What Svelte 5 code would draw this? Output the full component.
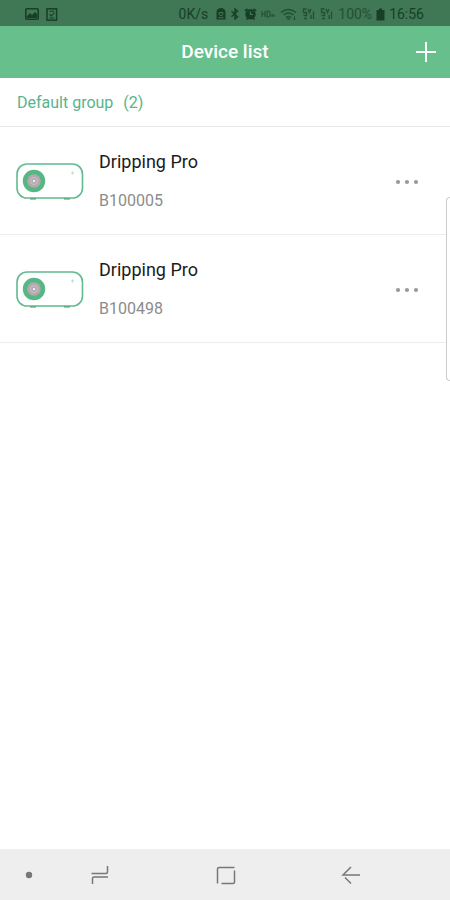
<script>
  let groupName = 'Default group';
  let devices = [
    { name: 'Dripping Pro', serial: 'B100005' },
    { name: 'Dripping Pro', serial: 'B100498' }
  ];
</script>

<div class="screen">
  <div class="status">
    <div class="notices">
      <svg width="14" height="12" viewBox="0 0 14 12">
        <rect x="0.8" y="0.8" width="12.4" height="10.4" rx="1" fill="none" stroke="currentColor" stroke-width="1.6" />
        <path d="M2 10V8l3-3 2 2 3-3 2 2v4z" fill="currentColor" />
      </svg>
      <svg width="12" height="13" viewBox="0 0 12 13">
        <rect x="1" y="0.8" width="9.6" height="11.4" fill="none" stroke="currentColor" stroke-width="1.5" />
        <path d="M3.5 3.2h4.6M3.5 6.2l1.8 1.8 3-3.2M3.5 10h4.6" fill="none" stroke="currentColor" stroke-width="1.1" />
      </svg>
    </div>
    <span class="speed">0K/s</span>
    <svg width="10" height="12" viewBox="0 0 10 12">
      <path d="M0.5 11.5V4a4.5 4 0 0 1 9 0v7.5z" fill="currentColor" />
      <path d="M3.2 4.5h3.6v2L5 8 3.2 6.5zM2.5 9.7h5" fill="none" stroke="#407755" stroke-width="1" />
    </svg>
    <svg width="10" height="12" viewBox="0 0 10 12">
      <path d="M1.5 3.3l6 5.4L5 11V1l2.5 2.3-6 5.4" fill="none" stroke="currentColor" stroke-width="1.4" />
    </svg>
    <svg width="13" height="12" viewBox="0 0 13 12">
      <circle cx="6.5" cy="6.3" r="5.2" fill="currentColor" />
      <path d="M0.8 2.8L3.5 0.8M12.2 2.8L9.5 0.8M2.5 11.5L4 10M10.5 11.500L9 10" stroke="currentColor" stroke-width="1.6" />
      <path d="M6.5 3.5v3H9" fill="none" stroke="#407755" stroke-width="1.2" />
    </svg>
    <svg class="dim" width="15" height="8" viewBox="0 0 15 8">
      <path d="M1 1v6M4 1v6M1 4h3M6 1v6h1l2-1V2L7 1zM11 4v3M11 5h2v2" fill="none" stroke="currentColor" stroke-width="1.1" />
    </svg>
    <svg class="dim" width="18" height="13" viewBox="0 0 18 13">
      <path d="M1 4.5q7.500-6 15 0M3.500 7q5-4 10 0M6 9.500q2.500-2 5 0" fill="none" stroke="currentColor" stroke-width="1.3" />
      <path d="M7 10.5h3L8.5 12zM14.5 8v4M13.3 10.8l1.2 1.2 1.2-1.2" fill="none" stroke="currentColor" stroke-width="0.9" />
    </svg>
    {#each [1, 2] as sim (sim)}
      <svg class="dim" width="14" height="12" viewBox="0 0 14 12">
        <path d="M4.5 1h-3v3.5h3v3h-3M6 1l1.500 3.500L9 1M2 10.500h3M9 11V7M11.500 11V3.500" fill="none" stroke="currentColor" stroke-width="1.3" />
      </svg>
    {/each}
    <span class="dim">100%</span>
    <svg width="9" height="13" viewBox="0 0 9 13">
      <path d="M0.5 2H3V0.500h3V2h2.500v10.500h-8z" fill="currentColor" />
    </svg>
    <span>16:56</span>
  </div>

  <header>
    <h1>Device list</h1>
    <button class="add" aria-label="Add device">
      <svg width="22" height="22" viewBox="0 0 22 22">
        <path d="M11 1v20M1 11h20" stroke="currentColor" stroke-width="2" />
      </svg>
    </button>
  </header>

  <main>
    <h2>{groupName}<span>({devices.length})</span></h2>
    <ul>
      {#each devices as device (device.serial)}
        <li>
          <svg width="68" height="38" viewBox="0 0 68 38">
            <path d="M14 35.5h6M48 35.5h6" stroke="#61866f" stroke-width="2" />
            <rect x="1" y="1" width="65.5" height="34" rx="10" fill="#fff" stroke="#62bb90" stroke-width="1.6" />
            <circle cx="18" cy="18" r="11.2" fill="#55b884" />
            <circle cx="18" cy="18" r="6.8" fill="#b3a9af" />
            <circle cx="18" cy="18" r="3.5" fill="none" stroke="#cbc5c8" stroke-width="1" />
            <circle cx="18" cy="18" r="1.2" fill="#eee" />
            <path d="M56.5 8.5v3M55 10h3" stroke="#b4dfc8" stroke-width="1" />
          </svg>
          <div class="info">
            <p class="name">{device.name}</p>
            <p class="serial">{device.serial}</p>
          </div>
          <button class="more" aria-label="Options for {device.serial}">
            <svg width="24" height="6" viewBox="0 0 24 6">
              <g fill="currentColor">
                <circle cx="3" cy="3" r="2.1" />
                <circle cx="12" cy="3" r="2.1" />
                <circle cx="21" cy="3" r="2.1" />
              </g>
            </svg>
          </button>
        </li>
      {/each}
    </ul>
  </main>

  <nav>
    <button aria-label="Toggle navigation bar">
      <svg width="20" height="20" viewBox="0 0 20 20"><circle cx="10" cy="10" r="3.2" fill="currentColor" /></svg>
    </button>
    <div class="keys">
      <button aria-label="Recent apps">
        <svg width="20" height="20" viewBox="0 0 20 20">
          <path d="M1.500 8.500H16q1.500 0 1.500-1.500V1M18 12H4q-1.500 0-1.500 1.500V19" fill="none" stroke="currentColor" stroke-width="1.5" />
        </svg>
      </button>
      <button aria-label="Home">
        <svg width="20" height="20" viewBox="0 0 20 20">
          <path d="M18.500 2.500H3q-1.500 0-1.500 1.500V18.500M5.500 18.500H17q1.500 0 1.500-1.500V5.500" fill="none" stroke="currentColor" stroke-width="1.5" />
        </svg>
      </button>
      <button aria-label="Back">
        <svg width="20" height="20" viewBox="0 0 20 20">
          <path d="M19 10H2l8-8M4 12.5l6 6" fill="none" stroke="currentColor" stroke-width="1.5" />
        </svg>
      </button>
    </div>
  </nav>

  <div class="edge-handle"></div>
</div>

<style>
  :global(body) {
    margin: 0;
    font-family: Roboto, "Liberation Sans", sans-serif;
  }

  .screen {
    display: flex;
    flex-direction: column;
    min-height: 100vh;
    background: #fff;
    overflow: hidden;
  }

  svg {
    display: block;
    flex: none;
  }

  button {
    padding: 0;
    border: 0;
    background: none;
    color: inherit;
    cursor: pointer;
  }

  .status {
    display: flex;
    align-items: center;
    gap: 4px;
    height: 26px;
    padding: 2px 26px 0 25px;
    box-sizing: border-box;
    background: #407755;
    color: #173f27;
    font-size: 14px;
    line-height: 24px;
  }

  .notices {
    display: flex;
    align-items: center;
    gap: 7px;
  }

  .speed {
    margin-left: auto;
    margin-right: 4px;
  }

  .dim {
    opacity: 0.7;
  }

  header {
    display: grid;
    grid-template-columns: 1fr auto 1fr;
    align-items: center;
    height: 52px;
    padding: 0 13px;
    background: #67c08b;
    color: #fff;
  }

  h1 {
    grid-column: 2;
    margin: 0;
    font-size: 19px;
    line-height: 24px;
    font-weight: 500;
  }

  .add {
    justify-self: end;
  }

  h2 {
    margin: 0;
    padding: 13px 17px 11px;
    border-bottom: 1px solid #e6e6e6;
    color: #58b48b;
    font-size: 16px;
    line-height: 24px;
    font-weight: 400;
  }

  h2 span {
    margin-left: 10px;
  }

  main {
    flex: 1;
  }

  ul {
    margin: 0;
    padding: 0;
    list-style: none;
  }

  li {
    display: flex;
    align-items: center;
    gap: 15px;
    padding: 23px 31px 21px 16px;
    border-bottom: 1px solid #ececec;
  }

  .info {
    flex: 1;
  }

  p {
    margin: 0;
    line-height: 24px;
  }

  .name {
    margin-bottom: 15px;
    color: #1c1c1c;
    font-size: 18px;
  }

  .serial {
    color: #8c8c8c;
    font-size: 16px;
  }

  .more {
    color: #999;
  }

  nav {
    display: flex;
    gap: 51px;
    padding: 16px 89px 15px 19px;
    background: #eee;
    color: #777;
  }

  .keys {
    flex: 1;
    display: flex;
    justify-content: space-between;
  }

  .edge-handle {
    position: fixed;
    top: 197px;
    right: 0;
    width: 3px;
    height: 182px;
    border: 1px solid #ccc;
    border-right: 0;
    border-radius: 6px 0 0 6px;
    background: #fff;
  }
</style>
